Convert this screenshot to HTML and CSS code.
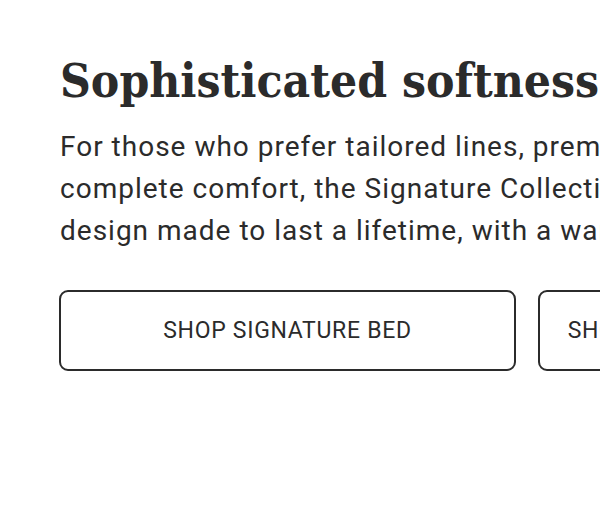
FILE: index.html
```html
<!DOCTYPE html>
<html lang="en">
<head>
<meta charset="utf-8">
<link rel="stylesheet" href="styles.css">
</head>
<body>
<section class="hero">
  <h1 class="title">Sophisticated softness</h1>
  <p class="lead">For those who prefer tailored lines, premium materials and<br>complete comfort, the Signature Collection offers a timeless<br>design made to last a lifetime, with a warranty to match.</p>
  <div class="actions">
    <a class="btn" href="#">SHOP SIGNATURE BED</a>
    <a class="btn" href="#">SHOP THE SIGNATURE COLLECTION</a>
  </div>
</section>
</body>
</html>
```
FILE: styles.css
```css
html, body {
  margin: 0;
  padding: 0;
  background: #ffffff;
  overflow: hidden;
}
.hero {
  width: 1100px;
  padding: 48px 0 0 59px;
  color: #2b2b2b;
}
.title {
  margin: 0 0 0 1px;
  font-family: "DejaVu Serif Condensed", "DejaVu Serif", serif;
  font-stretch: condensed;
  font-weight: 700;
  font-size: 47.5px;
  line-height: 64px;
  white-space: nowrap;
}
.lead {
  margin: 14px 0 0 1px;
  font-family: "Roboto", sans-serif;
  font-size: 28px;
  letter-spacing: 1px;
  line-height: 42px;
  white-space: nowrap;
}
.actions {
  display: flex;
  gap: 22px;
  margin-top: 38px;
}
.btn {
  box-sizing: border-box;
  width: 457px;
  height: 81px;
  display: flex;
  align-items: center;
  justify-content: center;
  border: 2px solid #2b2b2b;
  border-radius: 9px;
  color: #2b2b2b;
  text-decoration: none;
  font-family: "Roboto", sans-serif;
  font-size: 23px;
  letter-spacing: 0.7px;
  white-space: nowrap;
}
```
